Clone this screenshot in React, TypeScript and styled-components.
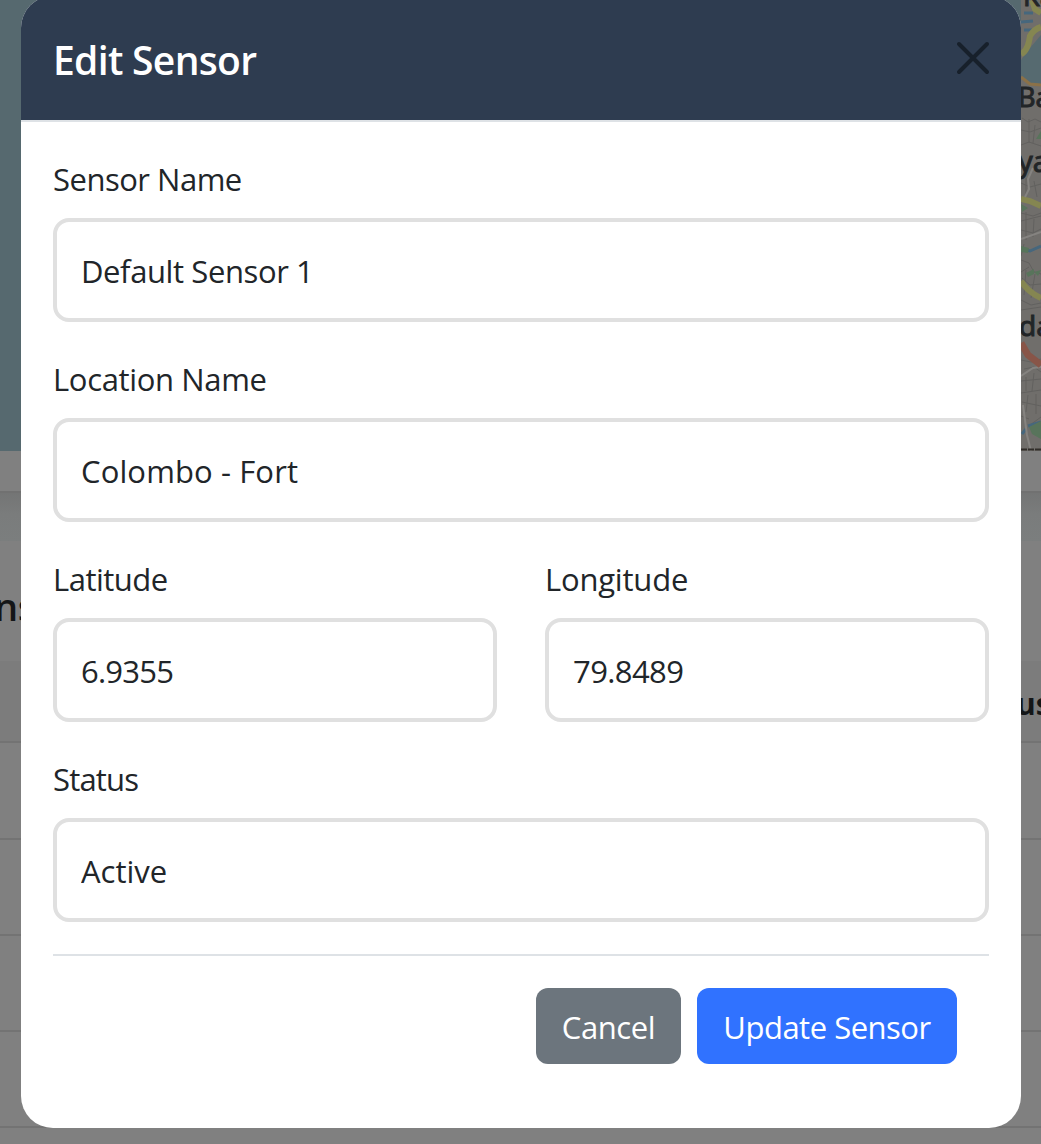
import React from "react";
import styled, { createGlobalStyle, css } from "styled-components";

const GlobalStyle = createGlobalStyle`
  * { box-sizing: border-box; }
  html, body { margin: 0; padding: 0; height: 1144px; overflow: hidden; background: #808080; }
  body { font-family: "Segoe UI", "Open Sans", "Noto Sans", sans-serif; color: #212529; }
`;

const Screen = styled.main`
  position: relative;
  width: 1041px;
  height: 1144px;
  overflow: hidden;
  background: #808080;
`;

const Page = styled.div`
  display: flex;
  flex-direction: column;
`;

const MapArea = styled.div`
  display: flex;
  justify-content: flex-end;
  height: 451px;
  background: #56696f;
`;

const MapCardFooter = styled.div`
  height: 42px;
  border-bottom: 2px solid #717171;
`;

const SectionGap = styled.div`
  height: 48px;
  background: linear-gradient(#747575, #7a7c7c 45%, #7b7e7e);
`;

const TableTitle = styled.h2`
  display: flex;
  align-items: center;
  height: 120px;
  margin: 0;
  padding-top: 10px;
  font-size: 38px;
  font-weight: 600;
  letter-spacing: -0.5px;
  color: #141617;
  white-space: nowrap;
  text-indent: -6px;
`;

const TableHead = styled.div`
  display: flex;
  align-items: center;
  justify-content: flex-end;
  height: 82px;
  padding-top: 4px;
  border-bottom: 2px solid #737373;
  background: #7c7c7c;
  font-size: 30px;
  font-weight: 700;
  color: #141617;
`;

const HeadLabel = styled.span`
  width: 25px;
  white-space: nowrap;
`;

const TableRow = styled.div<{ $height: number }>`
  height: ${(p) => p.$height}px;
  border-bottom: 2px solid #737373;
`;

const Modal = styled.section`
  position: absolute;
  top: -4px;
  left: 21px;
  display: flex;
  flex-direction: column;
  width: 1000px;
  height: 1132px;
  overflow: hidden;
  border-radius: 32px;
  background: #fff;
`;

const ModalHeader = styled.header`
  display: flex;
  align-items: center;
  justify-content: space-between;
  height: 126px;
  padding: 0 32px;
  border-bottom: 2px solid #dee2e6;
  background: #2e3c50;
`;

const Title = styled.h1`
  margin: 4px 0 0;
  font-size: 39px;
  font-weight: 600;
  letter-spacing: -0.68px;
  line-height: 60px;
  color: #fff;
`;

const CloseButton = styled.button`
  display: flex;
  width: 32px;
  height: 32px;
  margin: 0;
  padding: 0;
  border: 0;
  background: transparent;
  overflow: visible;

  svg { display: block; overflow: visible; }
`;

const Form = styled.form`
  display: flex;
  flex-direction: column;
  gap: 32px;
  padding: 32px 32px 0;
`;

const FieldRow = styled.div`
  display: grid;
  grid-template-columns: 1fr 1fr;
  gap: 48px;
`;

const FieldBox = styled.div`
  display: flex;
  flex-direction: column;
  gap: 16px;
`;

const bodyText = css<{ $track?: number }>`
  font-size: 31px;
  letter-spacing: ${(p) => p.$track ?? 0}px;
`;

const Label = styled.label<{ $track?: number }>`
  ${bodyText}
  height: 48px;
  line-height: 50px;
`;

const Input = styled.input<{ $track?: number }>`
  ${bodyText}
  width: 100%;
  height: 104px;
  margin: 0;
  padding: 1px 24px 0;
  border: 4px solid #e0e0e0;
  border-radius: 16px;
  outline: 0;
  background: #fff;
  font-family: inherit;
  color: #212529;
`;

const Footer = styled.footer`
  display: flex;
  justify-content: flex-end;
  gap: 16px;
  padding: 32px;
  border-top: 2px solid #dee2e6;
`;

const Button = styled.button<{ $primary?: boolean; $track?: number }>`
  ${bodyText}
  width: ${(p) => (p.$primary ? 260 : 145)}px;
  height: 76px;
  margin: 0;
  padding: 1px 0 0;
  border: 0;
  border-radius: 12px;
  background: ${(p) => (p.$primary ? "#3072ff" : "#6c757d")};
  font-family: inherit;
  color: #fff;
  white-space: nowrap;
`;

const StreetMap = () => (
  <svg width="20" height="451" viewBox="0 0 20 451" fontFamily="Noto Sans, sans-serif" fontSize="27">
    <rect width="20" height="451" fill="#706e6b" />
    <g fill="none" stroke="#62615f" strokeWidth="1">
      <path d="M1 118l6 4 7-3 6 3M0 130l9 2 11-4M8 119v24M0 145l8-3 12 4M14 125l-2 18M0 183l9 4 11-3M5 178v18M13 181l3 16M0 213l12 3 8-3M0 221l20-5M5 212v28M13 219l-1 18M0 230l12 3 8-4M0 260l8 3 5 9 7 2M3 244l-3 12M8 267l-8 5M1 278l8 7 11-1M5 270l-2 25M14 274l-4 24M0 300l10 5 10-2M0 310l20-3M0 360l10 2 10-3M3 369l10-2 7 5M0 381l20-2M5 377v14M13 373l-2 18M0 393l20-3M1 402l19 4M7 395l-2 17M15 394v20M0 416l8 3M9 425l11-8" />
    </g>
    <path d="M0 60l9-12 11-13v50l-10-1L0 76z" fill="#566a70" />
    <path d="M0 77l9 7 11 1" fill="none" stroke="#8b7148" strokeWidth="3" />
    <path d="M3 13h9M0 22l12-1M3 30h9M2 249l7 2 11-5M1 434l4-5M7 426l13-4" fill="none" stroke="#46677d" strokeWidth="3" />
    <path d="M15 139l5-8v8zM0 204l7 4-6 4zM5 273l8-4v5l-6 3zM13 272l7-2-3 6zM8 427l12-6v18l-9-5zM0 246l8 2-1 5-7-1z" fill="#58745b" />
    <path d="M0 199l9 2 11 5M0 281q7 11 20 17M0 54q7-3 9-18 4-7 11-9M11 0l3 9 6 4" fill="none" stroke="#858651" strokeWidth="6" />
    <path d="M4 197l4-8-1-10 5-11M0 239l20-7M2 405l4 30 4 16M0 376l12-8 8-1" fill="none" stroke="#858380" strokeWidth="2" />
    <path d="M0 343l7 12 13 10" fill="none" stroke="#885548" strokeWidth="7" />
    <path d="M0 449.5h20" stroke="#302d29" strokeWidth="2" strokeDasharray="6 1" />
    <g fill="#222527" stroke="#222527" strokeWidth="0.9">
      <text x="2" y="6">Ka</text>
      <text x="-3" y="107">Ba</text>
      <text x="-3" y="172" fontSize="29">ya</text>
      <text x="-2" y="336" fontSize="28">da</text>
    </g>
  </svg>
);

interface FieldProps {
  id: string;
  label: string;
  value: string;
  labelTrack?: number;
  valueTrack?: number;
}

const Field = ({ id, label, value, labelTrack, valueTrack }: FieldProps) => (
  <FieldBox>
    <Label htmlFor={id} $track={labelTrack}>{label}</Label>
    <Input id={id} defaultValue={value} $track={valueTrack} />
  </FieldBox>
);

const ROWS = [97, 96, 96, 96];

export default function App() {
  return (
    <Screen>
      <GlobalStyle />
      <Page>
        <MapArea><StreetMap /></MapArea>
        <MapCardFooter />
        <SectionGap />
        <TableTitle>ns</TableTitle>
        <TableHead><HeadLabel>us</HeadLabel></TableHead>
        {ROWS.map((height, i) => <TableRow key={i} $height={height} />)}
      </Page>
      <Modal role="dialog" aria-labelledby="dialog-title">
        <ModalHeader>
          <Title id="dialog-title">Edit Sensor</Title>
          <CloseButton type="button" aria-label="Close">
            <svg width="32" height="32" viewBox="0 0 32 32" fill="none" stroke="#17202b" strokeWidth="4" strokeLinecap="round">
              <path d="M2 2l28 28M30 2L2 30" />
            </svg>
          </CloseButton>
        </ModalHeader>
        <Form>
          <Field id="name" label="Sensor Name" value="Default Sensor 1" labelTrack={-0.5} valueTrack={-0.4} />
          <Field id="location" label="Location Name" value="Colombo - Fort" labelTrack={-0.35} valueTrack={0.12} />
          <FieldRow>
            <Field id="lat" label="Latitude" value="6.9355" labelTrack={-0.5} valueTrack={-0.75} />
            <Field id="lng" label="Longitude" value="79.8489" labelTrack={-0.2} valueTrack={-0.6} />
          </FieldRow>
          <Field id="status" label="Status" value="Active" labelTrack={-0.8} />
          <Footer>
            <Button type="button" $track={-0.4}>Cancel</Button>
            <Button type="submit" $primary $track={-0.5}>Update Sensor</Button>
          </Footer>
        </Form>
      </Modal>
    </Screen>
  );
}
